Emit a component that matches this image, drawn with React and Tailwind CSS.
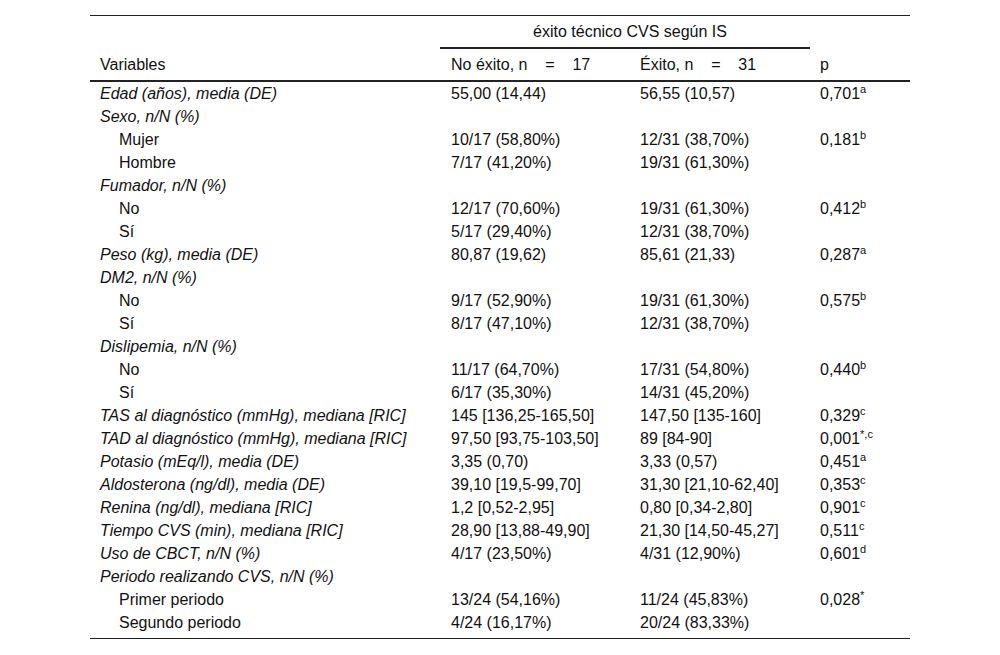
import React from "react";

const rows = [
  { v: "Edad (años), media (DE)", a: "55,00 (14,44)", b: "56,55 (10,57)", p: "0,701", s: "a" },
  { v: "Sexo, n/N (%)" },
  { v: "Mujer", sub: true, a: "10/17 (58,80%)", b: "12/31 (38,70%)", p: "0,181", s: "b" },
  { v: "Hombre", sub: true, a: "7/17 (41,20%)", b: "19/31 (61,30%)" },
  { v: "Fumador, n/N (%)" },
  { v: "No", sub: true, a: "12/17 (70,60%)", b: "19/31 (61,30%)", p: "0,412", s: "b" },
  { v: "Sí", sub: true, a: "5/17 (29,40%)", b: "12/31 (38,70%)" },
  { v: "Peso (kg), media (DE)", a: "80,87 (19,62)", b: "85,61 (21,33)", p: "0,287", s: "a" },
  { v: "DM2, n/N (%)" },
  { v: "No", sub: true, a: "9/17 (52,90%)", b: "19/31 (61,30%)", p: "0,575", s: "b" },
  { v: "Sí", sub: true, a: "8/17 (47,10%)", b: "12/31 (38,70%)" },
  { v: "Dislipemia, n/N (%)" },
  { v: "No", sub: true, a: "11/17 (64,70%)", b: "17/31 (54,80%)", p: "0,440", s: "b" },
  { v: "Sí", sub: true, a: "6/17 (35,30%)", b: "14/31 (45,20%)" },
  { v: "TAS al diagnóstico (mmHg), mediana [RIC]", a: "145 [136,25-165,50]", b: "147,50 [135-160]", p: "0,329", s: "c" },
  { v: "TAD al diagnóstico (mmHg), mediana [RIC]", a: "97,50 [93,75-103,50]", b: "89 [84-90]", p: "0,001", s: "*,c" },
  { v: "Potasio (mEq/l), media (DE)", a: "3,35 (0,70)", b: "3,33 (0,57)", p: "0,451", s: "a" },
  { v: "Aldosterona (ng/dl), media (DE)", a: "39,10 [19,5-99,70]", b: "31,30 [21,10-62,40]", p: "0,353", s: "c" },
  { v: "Renina (ng/dl), mediana [RIC]", a: "1,2 [0,52-2,95]", b: "0,80 [0,34-2,80]", p: "0,901", s: "c" },
  { v: "Tiempo CVS (min), mediana [RIC]", a: "28,90 [13,88-49,90]", b: "21,30 [14,50-45,27]", p: "0,511", s: "c" },
  { v: "Uso de CBCT, n/N (%)", a: "4/17 (23,50%)", b: "4/31 (12,90%)", p: "0,601", s: "d" },
  { v: "Periodo realizando CVS, n/N (%)" },
  { v: "Primer periodo", sub: true, a: "13/24 (54,16%)", b: "11/24 (45,83%)", p: "0,028", s: "*" },
  { v: "Segundo periodo", sub: true, a: "4/24 (16,17%)", b: "20/24 (83,33%)" },
];

export default function App() {
  return (
    <div
      className="w-[1000px] h-[655px] bg-white text-[16px] text-[#111]"
      style={{ fontFamily: '"Liberation Sans", Arial, sans-serif' }}
    >
      <div className="pt-[15px] px-[90px]">
        <table className="w-[820px] border-collapse table-fixed">
          <colgroup>
            <col className="w-[350px]" />
            <col className="w-[190px]" />
            <col className="w-[180px]" />
            <col className="w-[100px]" />
          </colgroup>
          <thead>
            <tr className="border-t border-[#222]">
              <th className="h-[32px]"></th>
              <th colSpan={2} className="h-[32px] font-normal text-center align-middle border-b-2 border-[#222] pl-[10px] pt-[1px]">
                éxito técnico CVS según IS
              </th>
              <th></th>
            </tr>
            <tr className="border-b-2 border-[#222]">
              <th className="h-[33px] font-normal text-left pl-[10px] align-middle pt-[2px]">Variables</th>
              <th className="font-normal text-left pl-[11px] align-middle whitespace-pre pt-[2px]">No éxito, n    =    17</th>
              <th className="font-normal text-left pl-[10px] align-middle whitespace-pre pt-[2px]">Éxito, n    =    31</th>
              <th className="font-normal text-left pl-[10px] align-middle pt-[2px]">p</th>
            </tr>
          </thead>
          <tbody className="border-b border-[#222]">
            {rows.map((r, i) => (
              <tr key={i} className={i === 0 ? "h-[24px]" : i === rows.length - 1 ? "h-[28px] align-top" : "h-[23px]"}>
                <td className={(r.sub ? "pl-[29px] not-italic" : "pl-[10px] italic") + " leading-[23px] whitespace-nowrap"}>{r.v}</td>
                <td className="pl-[11px] leading-[23px] whitespace-nowrap">{r.a}</td>
                <td className="pl-[10px] leading-[23px] whitespace-nowrap">{r.b}</td>
                <td className="pl-[10px] leading-[23px] whitespace-nowrap">
                  {r.p}
                  {r.s && <sup className="text-[11px] relative -top-[6px]">{r.s}</sup>}
                </td>
              </tr>
            ))}
          </tbody>
        </table>
      </div>
    </div>
  );
}
